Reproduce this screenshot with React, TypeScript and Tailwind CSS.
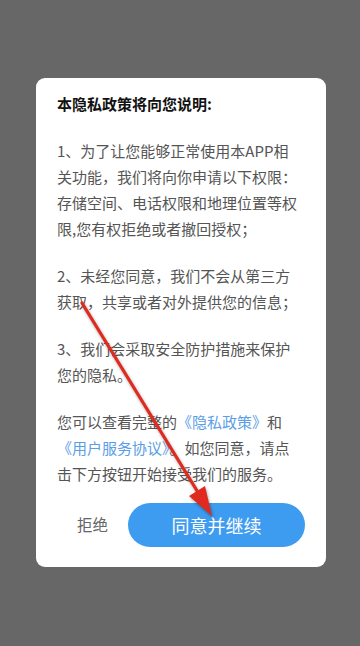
import React from "react";

const Line = ({ children }: { children: React.ReactNode }) => (
  <div className="whitespace-nowrap">{children}</div>
);

export default function App() {
  return (
    <div
      className="relative w-[360px] h-[646px] overflow-hidden bg-[#676767] pt-[78px] pl-[36px]"
      style={{ fontFamily: '"Noto Sans CJK SC", "Noto Sans", sans-serif' }}
    >
      <div className="w-[290px] h-[489px] rounded-[9px] bg-white px-[21px] pt-[13px] pb-[20px] flex flex-col">
        <div className="text-[15px] leading-[26px] font-bold text-[#111]">本隐私政策将向您说明:</div>
        <div className="text-[15px] leading-[26px] text-[#555] mt-[21px] flex flex-col gap-[21px]">
          <div>
            <Line>1、为了让您能够正常使用本APP相</Line>
            <Line>关功能，我们将向你申请以下权限：</Line>
            <Line>存储空间、电话权限和地理位置等权</Line>
            <Line>限,您有权拒绝或者撤回授权；</Line>
          </div>
          <div>
            <Line>2、未经您同意，我们不会从第三方</Line>
            <Line>获取，共享或者对外提供您的信息；</Line>
          </div>
          <div>
            <Line>3、我们会采取安全防护措施来保护</Line>
            <Line>您的隐私。</Line>
          </div>
          <div>
            <Line>
              您可以查看完整的<span className="text-[#5a9ee6]">《隐私政策》</span>和
            </Line>
            <Line>
              <span className="text-[#5a9ee6]">《用户服务协议》</span>。如您同意，请点
            </Line>
            <Line>击下方按钮开始接受我们的服务。</Line>
          </div>
        </div>
        <div className="mt-[16px] flex items-center">
          <div className="flex-1 text-center text-[15.5px] text-[#666]">拒绝</div>
          <div className="w-[177px] h-[44px] rounded-full bg-[#3d9cf0] flex items-center justify-center text-white text-[18px]">
            同意并继续
          </div>
        </div>
      </div>
      <svg
        className="absolute left-0 top-0 pointer-events-none"
        width="360"
        height="646"
        viewBox="0 0 360 646"
        style={{ filter: "drop-shadow(1px 2px 1.5px rgba(0,0,0,0.35))" }}
      >
        <line x1="82" y1="303" x2="199" y2="494" stroke="#e02a1f" strokeWidth="3.2" strokeLinecap="round" />
        <polygon points="212,516 189,496 205,486" fill="#e02a1f" />
      </svg>
    </div>
  );
}
